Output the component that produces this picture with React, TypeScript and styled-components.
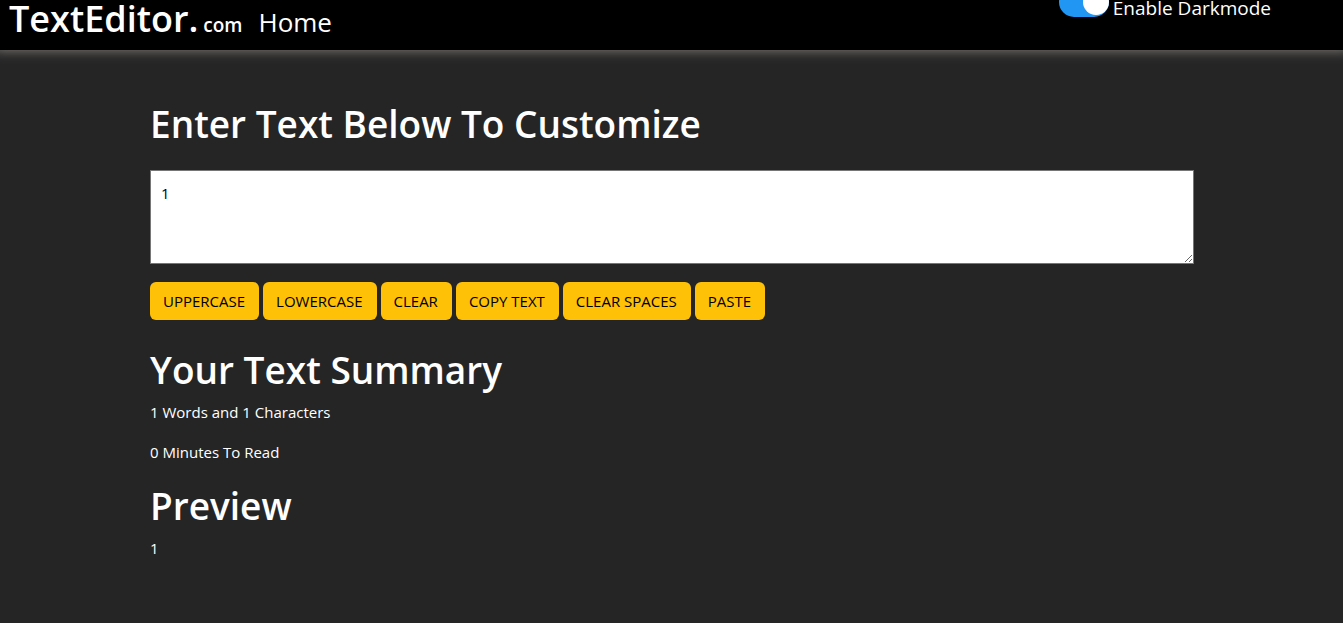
import React, { useState } from "react";
import styled, { createGlobalStyle } from "styled-components";

const GlobalStyle = createGlobalStyle`
  *, *::before, *::after { box-sizing: border-box; }
  body {
    margin: 0;
    background: #252525;
    color: #fff;
    font-family: "Segoe UI", "Open Sans", "Noto Sans", sans-serif;
    font-size: 15px;
    line-height: 24px;
  }
`;

const Header = styled.header`
  display: flex;
  align-items: flex-start;
  justify-content: space-between;
  height: 50px;
  padding: 0 72px 0 9px;
  background: #000;
  box-shadow: 0 -6px 12px 6px #8a8580;
`;

const Nav = styled.nav`
  display: flex;
  align-items: baseline;
  line-height: 38px;
`;

const Brand = styled.a`
  color: #fff;
  font-size: 36px;
  font-weight: 600;
  text-decoration: none;
`;

const Domain = styled.span`
  margin-left: 5px;
  font-size: 19px;
`;

const NavLink = styled.a`
  margin-left: 16px;
  color: #fff;
  font-size: 26px;
  text-decoration: none;
`;

const Switch = styled.label`
  display: flex;
  align-items: flex-start;
  gap: 4px;
  margin-top: -13px;
  font-size: 19px;
  line-height: 42px;
`;

const Toggle = styled.input`
  appearance: none;
  display: flex;
  align-items: center;
  width: 50px;
  height: 30px;
  margin: 0;
  border-radius: 15px;
  background: #ccc;
  cursor: pointer;

  &::before {
    content: "";
    width: 26px;
    height: 26px;
    border-radius: 50%;
    background: #fff;
  }

  &:checked {
    justify-content: flex-end;
    background: #2196f3;
  }
`;

const Main = styled.main`
  padding: 50px 149px 50px 150px;
`;

const Title = styled.h1`
  margin: 0 0 6px;
  font-size: 37px;
  font-weight: 600;
  line-height: 48px;
`;

const Editor = styled.textarea`
  display: block;
  width: 100%;
  height: 94px;
  margin-top: 22px;
  padding: 10px;
  border: 1px solid #767676;
  background: #fff;
  color: #000;
  font: inherit;
  resize: vertical;
`;

const Actions = styled.div`
  display: flex;
  flex-wrap: wrap;
  gap: 4px;
  margin: 18px 0 26px;
`;

const ActionButton = styled.button`
  height: 38px;
  padding: 0 14px 0 13px;
  border: 0;
  border-radius: 6px;
  background: #ffc107;
  color: #000;
  font: inherit;
  cursor: pointer;
`;

const Text = styled.p`
  margin: 0 0 16px;

  & + h1 {
    margin-top: 18px;
  }
`;

export default function App() {
  const [text, setText] = useState("1");
  const [dark, setDark] = useState(true);
  const words = text.split(/\s+/).filter(Boolean).length;

  const actions = [
    { label: "UPPERCASE", run: () => setText(text.toUpperCase()) },
    { label: "LOWERCASE", run: () => setText(text.toLowerCase()) },
    { label: "CLEAR", run: () => setText("") },
    { label: "COPY TEXT", run: () => navigator.clipboard.writeText(text) },
    { label: "CLEAR SPACES", run: () => setText(text.split(/\s+/).join(" ")) },
    { label: "PASTE", run: () => navigator.clipboard.readText().then((t) => setText(text + t)) },
  ];

  return (
    <>
      <GlobalStyle />
      <Header>
        <Nav>
          <Brand href="#">
            TextEditor.<Domain>com</Domain>
          </Brand>
          <NavLink href="#">Home</NavLink>
        </Nav>
        <Switch>
          <Toggle type="checkbox" checked={dark} onChange={(e) => setDark(e.target.checked)} />
          <span>Enable Darkmode</span>
        </Switch>
      </Header>
      <Main>
        <Title>
          <label htmlFor="editor">Enter Text Below To Customize</label>
        </Title>
        <Editor id="editor" value={text} onChange={(e) => setText(e.target.value)} />
        <Actions>
          {actions.map((a) => (
            <ActionButton key={a.label} type="button" onClick={a.run}>
              {a.label}
            </ActionButton>
          ))}
        </Actions>
        <Title>Your Text Summary</Title>
        <Text>{words} Words and {text.length} Characters</Text>
        <Text>{Math.floor(words * 0.008)} Minutes To Read</Text>
        <Title>Preview</Title>
        <Text>{text}</Text>
      </Main>
    </>
  );
}
